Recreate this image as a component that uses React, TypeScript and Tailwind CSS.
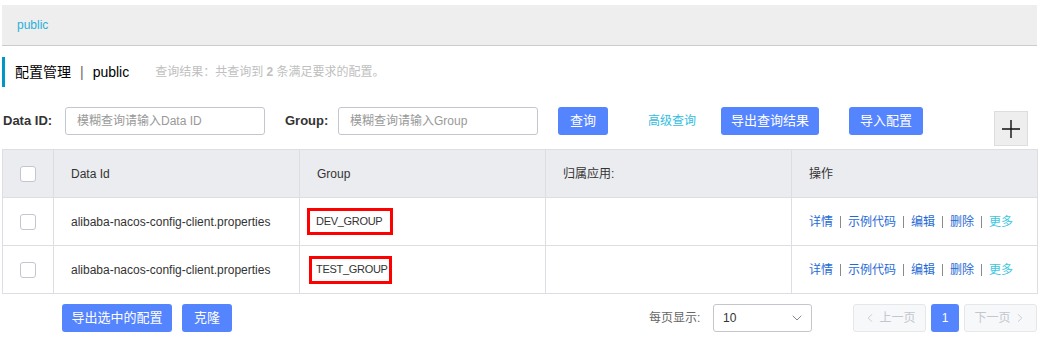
import { ChevronDown, ChevronLeft, ChevronRight } from 'lucide-react'

const font = { fontFamily: '"Liberation Sans", "Noto Sans CJK SC", sans-serif' }

const rows = [
  { id: 'alibaba-nacos-config-client.properties', group: 'DEV_GROUP', box: 'ml-[7px] w-[86px] h-[27px] pl-[6px]' },
  { id: 'alibaba-nacos-config-client.properties', group: 'TEST_GROUP', box: 'ml-[9px] w-[83px] h-[28px] pl-[4px]' },
]

function Checkbox() {
  return <div className="w-[16px] h-[16px] border border-[#c4c6cf] rounded-[3px] bg-white mx-auto" />
}

function Actions() {
  const sep = <span className="mx-[7px] w-[1px] h-[12px] bg-[#8a8a8a]" />
  return (
    <div className="flex items-center text-[12px] text-[#1f6ad6]">
      <span>详情</span>
      {sep}
      <span>示例代码</span>
      {sep}
      <span>编辑</span>
      {sep}
      <span>删除</span>
      {sep}
      <span className="text-[#3bc6e2]">更多</span>
    </div>
  )
}

export default function App() {
  return (
    <div className="w-[1046px] h-[343px] bg-white overflow-hidden text-[#333]" style={font}>
      {/* breadcrumb bar */}
      <div className="mx-[2px] mt-[5px] w-[1035px] h-[41px] bg-[#eeeeee] border-b border-[#cccccc] flex items-center pl-[15px] text-[12px] text-[#2ab0d8]">
        public
      </div>

      {/* title */}
      <div className="ml-[2px] mt-[11px] h-[30px] border-l-[3px] border-[#0097c7] flex items-center pl-[10px]">
        <span className="text-[14px] text-black">配置管理</span>
        <span className="text-[14px] text-[#666] mx-[9px]">|</span>
        <span className="text-[14px] text-black">public</span>
        <span className="ml-[26px] text-[12px] text-[#c0c0c0]">
          查询结果：共查询到 <b className="font-bold">2</b> 条满足要求的配置。
        </span>
      </div>

      {/* search row */}
      <div className="mt-[20px] h-[28px] flex items-start pl-[3px] text-[12px]">
        <span className="w-[62px] h-[28px] flex items-center font-bold text-[13px] text-[#333]">Data ID:</span>
        <div className="w-[200px] h-[28px] border border-[#c4c6cf] rounded-[3px] flex items-center pl-[11px] text-[#999]">
          模糊查询请输入Data ID
        </div>
        <span className="ml-[20px] w-[53px] h-[28px] flex items-center font-bold text-[13px] text-[#333]">Group:</span>
        <div className="w-[200px] h-[28px] border border-[#c4c6cf] rounded-[3px] flex items-center pl-[11px] text-[#999]">
          模糊查询请输入Group
        </div>
        <button className="ml-[20px] w-[50px] h-[28px] rounded-[3px] bg-[#5584ff] text-white text-[13px]">查询</button>
        <span className="ml-[40px] w-[73px] h-[28px] flex items-center text-[12px] text-[#33bde0]">高级查询</span>
        <button className="w-[98px] h-[28px] rounded-[3px] bg-[#5584ff] text-white text-[13px]">导出查询结果</button>
        <button className="ml-[30px] w-[74px] h-[28px] rounded-[3px] bg-[#5584ff] text-white text-[13px]">导入配置</button>
        <div className="ml-[71px] mt-[4px] w-[34px] h-[35px] bg-[#eeeeee] border border-[#dddddd] flex items-center justify-center">
          <svg width="20" height="20" viewBox="0 0 20 20">
            <path d="M10 1v18M1 10h18" stroke="#111" strokeWidth="1.4" fill="none" />
          </svg>
        </div>
      </div>

      {/* table */}
      <table className="ml-[2px] mt-[14px] w-[1035px] table-fixed border-collapse border border-[#dcdee3] text-[12px]">
        <colgroup>
          <col className="w-[51px]" />
          <col className="w-[246px]" />
          <col className="w-[246px]" />
          <col className="w-[246px]" />
          <col className="w-[246px]" />
        </colgroup>
        <thead>
          <tr className="h-[48px] bg-[#ebecf0] text-[#333]">
            <th className="border border-[#dcdee3] font-normal"><Checkbox /></th>
            <th className="border border-[#dcdee3] font-normal text-left pl-[17px]">Data Id</th>
            <th className="border border-[#dcdee3] font-normal text-left pl-[17px]">Group</th>
            <th className="border border-[#dcdee3] font-normal text-left pl-[17px]">归属应用:</th>
            <th className="border border-[#dcdee3] font-normal text-left pl-[17px]">操作</th>
          </tr>
        </thead>
        <tbody>
          {rows.map((r) => (
            <tr key={r.group} className="h-[48px] text-[#333]">
              <td className="border border-[#dcdee3]"><Checkbox /></td>
              <td className="border border-[#dcdee3] pl-[17px]">{r.id}</td>
              <td className="border border-[#dcdee3]">
                <div className={`${r.box} border-[3px] border-[#ff0000] flex items-center text-[11px] tracking-[-0.3px] whitespace-nowrap`}>
                  {r.group}
                </div>
              </td>
              <td className="border border-[#dcdee3]" />
              <td className="border border-[#dcdee3] pl-[17px]"><Actions /></td>
            </tr>
          ))}
        </tbody>
      </table>

      {/* footer */}
      <div className="mt-[10px] h-[28px] flex items-center">
        <button className="ml-[62px] w-[110px] h-[28px] rounded-[3px] bg-[#5584ff] text-white text-[13px]">导出选中的配置</button>
        <button className="ml-[10px] w-[50px] h-[28px] rounded-[3px] bg-[#5584ff] text-white text-[13px]">克隆</button>
        <span className="ml-[417px] w-[64px] text-[12px] text-[#666]">每页显示:</span>
        <div className="w-[99px] h-[28px] border border-[#c4c6cf] rounded-[3px] flex items-center pl-[9px] pr-[6px] text-[12px] text-[#333]">
          <span className="flex-1">10</span>
          <ChevronDown size={16} strokeWidth={1.5} className="text-[#888]" />
        </div>
        <div className="ml-[41px] w-[73px] h-[28px] border border-[#e6e7eb] bg-[#f7f8fa] rounded-[3px] flex items-center justify-center text-[12px] text-[#c4c6cf]">
          <ChevronLeft size={14} strokeWidth={1.5} />
          <span className="ml-[2px]">上一页</span>
        </div>
        <div className="ml-[5px] w-[28px] h-[28px] rounded-[3px] bg-[#5584ff] text-white text-[12px] flex items-center justify-center">1</div>
        <div className="ml-[5px] w-[73px] h-[28px] border border-[#e6e7eb] bg-[#f7f8fa] rounded-[3px] flex items-center justify-center text-[12px] text-[#c4c6cf]">
          <span className="mr-[2px]">下一页</span>
          <ChevronRight size={14} strokeWidth={1.5} />
        </div>
      </div>
    </div>
  )
}
